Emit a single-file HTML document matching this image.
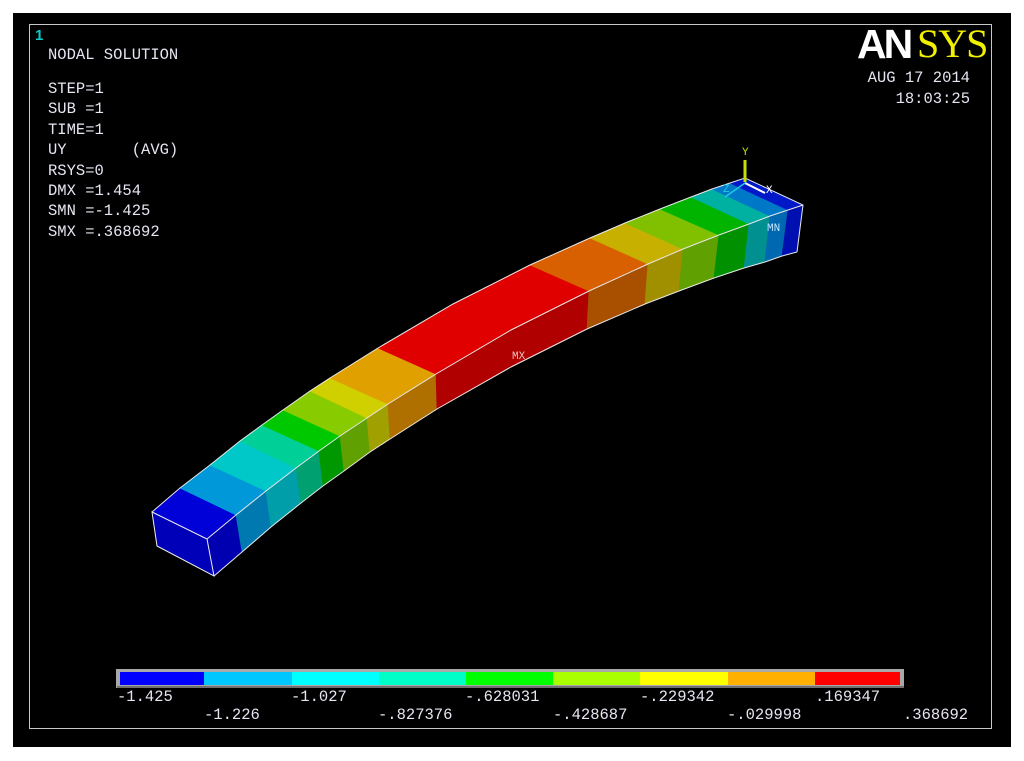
<!DOCTYPE html>
<html><head><meta charset="utf-8"><style>
html,body{margin:0;padding:0;background:#fff;width:1024px;height:761px;overflow:hidden}
#blk{position:absolute;left:13px;top:13px;width:998px;height:734px;background:#000}
#frm{position:absolute;left:29px;top:24px;width:961px;height:703px;border:1px solid #c8c8c8}
.t{position:absolute;font-family:"Liberation Mono",monospace;font-size:15.5px;color:#e6e6f2;white-space:pre;line-height:16px}
svg{position:absolute;left:0;top:0}
</style></head><body>
<div id="blk"></div><div id="frm"></div>
<svg width="1024" height="761" stroke-width="0.7">
<g>
<polygon points="152,512 180,488 236,515 207,539" fill="#0000d8" stroke="#0000d8"/>
<polygon points="207,539 236,515 242,552 214,576" fill="#0000b0" stroke="#0000b0"/>
<polygon points="180,488 210,465 266,491 236,515" fill="#0098d8" stroke="#0098d8"/>
<polygon points="236,515 266,491 271,527 242,552" fill="#0078b0" stroke="#0078b0"/>
<polygon points="210,465 240,441 296,468 266,491" fill="#00c8c8" stroke="#00c8c8"/>
<polygon points="266,491 296,468 301,503 271,527" fill="#009ea8" stroke="#009ea8"/>
<polygon points="240,441 262,425 319,451 296,468" fill="#00d098" stroke="#00d098"/>
<polygon points="296,468 319,451 323,486 301,503" fill="#00a070" stroke="#00a070"/>
<polygon points="262,425 283,410 340,436 319,451" fill="#00c800" stroke="#00c800"/>
<polygon points="319,451 340,436 344,471 323,486" fill="#009800" stroke="#009800"/>
<polygon points="283,410 310,391 367,418 340,436" fill="#88cc00" stroke="#88cc00"/>
<polygon points="340,436 367,418 370,452 344,471" fill="#60a000" stroke="#60a000"/>
<polygon points="310,391 330,378 388,404 367,418" fill="#d0d000" stroke="#d0d000"/>
<polygon points="367,418 388,404 390,439 370,452" fill="#a0a000" stroke="#a0a000"/>
<polygon points="330,378 378,348 436,374 388,404" fill="#e0a000" stroke="#e0a000"/>
<polygon points="388,404 436,374 437,409 390,439" fill="#b07000" stroke="#b07000"/>
<polygon points="378,348 453,304 530,265 589,291 511,330 436,374" fill="#e00000" stroke="#e00000"/>
<polygon points="436,374 511,330 589,291 587,329 511,367 437,409" fill="#b00000" stroke="#b00000"/>
<polygon points="530,265 590,238 648,264 589,291" fill="#d86000" stroke="#d86000"/>
<polygon points="589,291 648,264 645,304 587,329" fill="#a85000" stroke="#a85000"/>
<polygon points="590,238 625,223 683,249 648,264" fill="#c8b000" stroke="#c8b000"/>
<polygon points="648,264 683,249 679,291 645,304" fill="#a09000" stroke="#a09000"/>
<polygon points="625,223 660,209 719,235 683,249" fill="#80c000" stroke="#80c000"/>
<polygon points="683,249 719,235 714,278 679,291" fill="#60a000" stroke="#60a000"/>
<polygon points="660,209 691,197 749,224 719,235" fill="#00b400" stroke="#00b400"/>
<polygon points="719,235 749,224 744,268 714,278" fill="#009000" stroke="#009000"/>
<polygon points="691,197 712,189 770,216 749,224" fill="#00b0a0" stroke="#00b0a0"/>
<polygon points="749,224 770,216 765,262 744,268" fill="#009090" stroke="#009090"/>
<polygon points="712,189 730,183 788,210 770,216" fill="#0078c8" stroke="#0078c8"/>
<polygon points="770,216 788,210 782,256 765,262" fill="#0068b0" stroke="#0068b0"/>
<polygon points="730,183 745,178 803,205 788,210" fill="#0018c8" stroke="#0018c8"/>
<polygon points="788,210 803,205 797,252 782,256" fill="#0010b0" stroke="#0010b0"/>
</g>
<polygon points="152,512 207,539 214,576 157,546" fill="#0000b8" stroke="#eee" stroke-width="1"/>
<g fill="none" stroke="#e8e8e8" stroke-width="1">
<polyline points="152,512 180,488 210,465 240,441 262,425 283,410 310,391 330,378 378,348 453,304 530,265 590,238 625,223 660,209 691,197 712,189 730,183 745,178 803,205 797,252"/>
<polyline points="207,539 236,515 266,491 296,468 319,451 340,436 367,418 388,404 436,374 511,330 589,291 648,264 683,249 719,235 749,224 770,216 788,210 803,205"/>
<polyline points="214,576 242,552 271,527 301,503 323,486 344,471 370,452 390,439 437,409 511,367 587,329 645,304 679,291 714,278 744,268 765,262 782,256 797,252"/>
</g>
<line x1="745" y1="182" x2="745" y2="160" stroke="#c8e000" stroke-width="3"/>
<line x1="745" y1="183" x2="765" y2="193" stroke="#fff" stroke-width="2"/>
<line x1="745" y1="183" x2="725" y2="197" stroke="#20c8e0" stroke-width="1.5"/>
<g font-family="Liberation Mono" font-size="11">
<text x="742" y="155" fill="#c8e000">Y</text>
<text x="766" y="193" fill="#fff">X</text>
<text x="723" y="192" fill="#20c8e0">Z</text>
<text x="767" y="231" fill="#c0e8ff">MN</text>
<text x="512" y="359" fill="#f0c0c0">MX</text>
</g>
<rect x="116" y="669" width="788" height="19" fill="#a8a8a8"/>
<rect x="117" y="686" width="787" height="2" fill="#707070"/>
<rect x="120" y="672" width="84" height="13" fill="#0000ff"/>
<rect x="204" y="672" width="88" height="13" fill="#00c8ff"/>
<rect x="292" y="672" width="87" height="13" fill="#00ffff"/>
<rect x="379" y="672" width="87" height="13" fill="#00ffc8"/>
<rect x="466" y="672" width="87" height="13" fill="#00ff00"/>
<rect x="553" y="672" width="87" height="13" fill="#aaff00"/>
<rect x="640" y="672" width="88" height="13" fill="#ffff00"/>
<rect x="728" y="672" width="87" height="13" fill="#ffb000"/>
<rect x="815" y="672" width="85" height="13" fill="#ff0000"/>
</svg>
<div class="t" style="left:35px;top:28px;color:#10c8c8;font-weight:bold;font-family:'Liberation Sans',sans-serif;font-size:15px">1</div>
<div class="t" style="left:48px;top:47px">NODAL SOLUTION</div>
<div class="t" style="left:48px;top:79px;line-height:20.4px">STEP=1
SUB =1
TIME=1
UY       (AVG)
RSYS=0
DMX =1.454
SMN =-1.425
SMX =.368692</div>
<div style="position:absolute;left:857px;top:22px;font-family:'Liberation Sans',sans-serif;font-weight:bold;font-size:41px;color:#fff;letter-spacing:-3px;line-height:44px">AN</div>
<div style="position:absolute;left:917px;top:22px;font-family:'Liberation Serif',serif;font-size:40px;color:#f0f000;line-height:44px;letter-spacing:-1px">SYS</div>
<div class="t" style="right:54px;top:70px;text-align:right">AUG 17 2014</div>
<div class="t" style="right:54px;top:91px;text-align:right">18:03:25</div>
<div class="t" style="left:117px;top:689px">-1.425</div>
<div class="t" style="left:291px;top:689px">-1.027</div>
<div class="t" style="left:465px;top:689px">-.628031</div>
<div class="t" style="left:640px;top:689px">-.229342</div>
<div class="t" style="left:815px;top:689px">.169347</div>
<div class="t" style="left:204px;top:707px">-1.226</div>
<div class="t" style="left:378px;top:707px">-.827376</div>
<div class="t" style="left:553px;top:707px">-.428687</div>
<div class="t" style="left:727px;top:707px">-.029998</div>
<div class="t" style="left:903px;top:707px">.368692</div>
</body></html>
